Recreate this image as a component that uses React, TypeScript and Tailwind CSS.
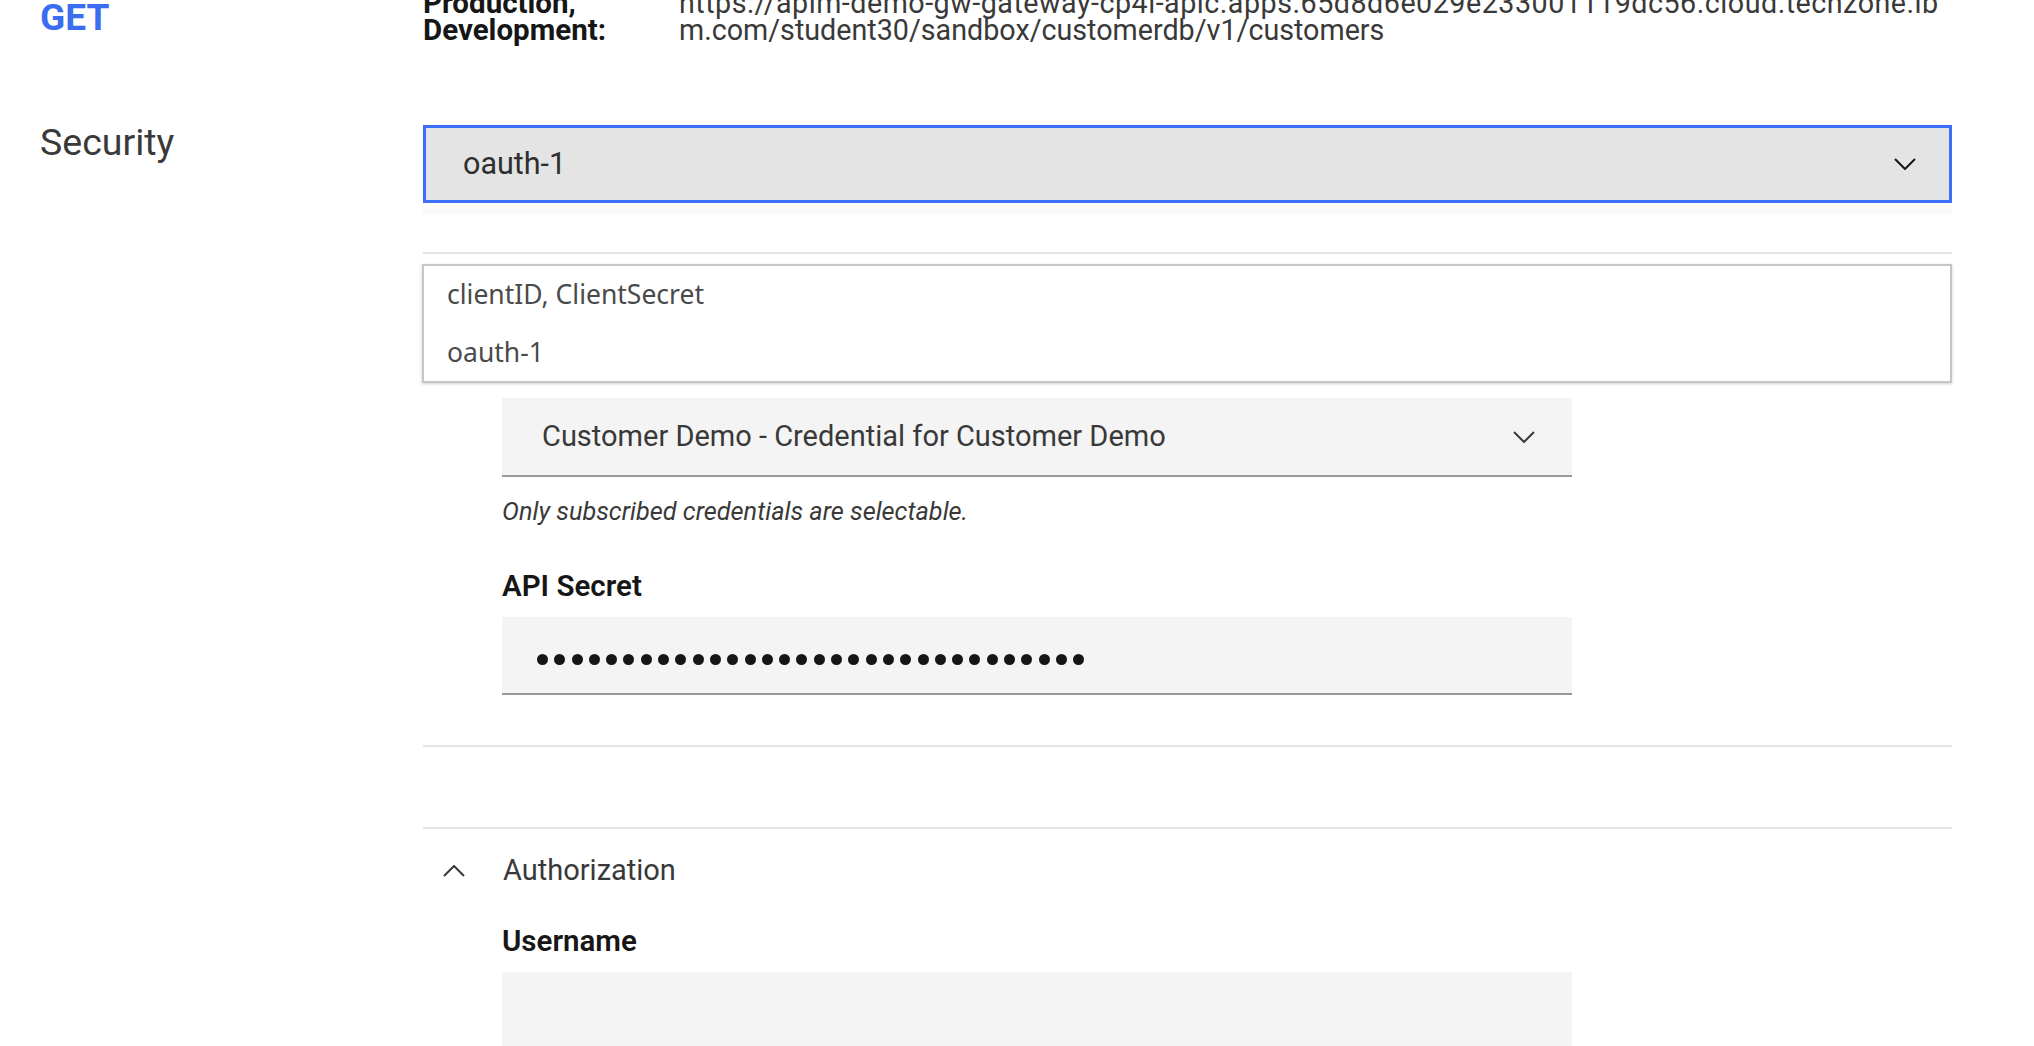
import React from 'react';

function Chevron({ up = false, className = '' }: { up?: boolean; className?: string }) {
  return (
    <svg width="22" height="12" viewBox="0 0 22 12" fill="none" className={className}>
      <polyline
        points={up ? '1,11 11,1 21,11' : '1,1 11,11 21,1'}
        stroke="currentColor"
        strokeWidth="2"
      />
    </svg>
  );
}

export default function App() {
  const dots = Array.from({ length: 32 });

  return (
    <div className="relative h-[1046px] w-[2034px] overflow-hidden bg-white font-['Roboto',sans-serif] text-[#161616]">
      {/* endpoint row */}
      <div className="flex items-start">
        <div className="-mt-[1px] w-[423px] pl-[40px] text-[37px] font-bold leading-[37px] text-[#3a6df0]">
          GET
        </div>
        <div className="-mt-[10px] flex">
          <div className="w-[256px] text-[29.5px] font-bold leading-[27px]">
            Production,
            <br />
            Development:
          </div>
          <div className="text-[28.7px] leading-[27px] text-[#393939]">
            <span className="tracking-[0.5px]">
              https://apim-demo-gw-gateway-cp4i-apic.apps.65d8d6e029e233001119dc56.cloud.techzone.ib
            </span>
            <br />
            m.com/student30/sandbox/customerdb/v1/customers
          </div>
        </div>
      </div>

      {/* security row */}
      <div className="mt-[81px] flex items-start">
        <div className="-mt-[1px] w-[423px] pl-[40px] text-[37.5px] leading-[37px] text-[#393939]">
          Security
        </div>
        <div className="w-[1529px]">
          <div className="flex h-[78px] items-center justify-between border-[3px] border-[#3d6ff7] bg-[#e4e4e4] pl-[37px] pr-[33px] text-[30.5px] text-[#2f2f2f]">
            <span>oauth-1</span>
            <Chevron className="text-[#161616]" />
          </div>
          <div className="mt-[4px] h-[8px] bg-[#fafafa]" />

          <div className="relative mt-[37px]">
            <div className="h-[2px] bg-[#e4e4e4]" />
            <div className="pl-[79px] pt-[144px]">
              <div className="flex h-[79px] w-[1070px] items-center justify-between border-b-2 border-[#9a9a9a] bg-[#f4f4f4] pl-[40px] pr-[37px] text-[29px] text-[#393939]">
                <span>Customer Demo - Credential for Customer Demo</span>
                <Chevron className="text-[#393939]" />
              </div>
              <div className="mt-[22px] text-[25.3px] italic leading-[26px] text-[#393939]">
                Only subscribed credentials are selectable.
              </div>
              <div className="mt-[46px] text-[29.5px] font-semibold leading-[30px]">API Secret</div>
              <div className="mt-[16px] flex h-[78px] w-[1070px] items-center gap-[6.3px] border-b-2 border-[#9a9a9a] bg-[#f4f4f4] pl-[35px] pt-[8px]">
                {dots.map((_, i) => (
                  <span key={i} className="h-[11px] w-[11px] rounded-full bg-[#161616]" />
                ))}
              </div>
            </div>

            {/* open security menu */}
            <div className="absolute left-[-1px] top-[12px] flex h-[119px] w-[1530px] flex-col gap-[29px] border-2 border-[#c6c6c6] bg-white pl-[23px] pt-[14px] font-['Noto_Sans',sans-serif] text-[26.5px] leading-[29px] text-[#4a4a4a] shadow-[0_1px_3px_rgba(0,0,0,0.2)]">
              <div>clientID, ClientSecret</div>
              <div>oauth-1</div>
            </div>
          </div>

          <div className="mt-[50px] h-[2px] bg-[#e4e4e4]" />
          <div className="mt-[80px] h-[2px] bg-[#e4e4e4]" />

          <div className="mt-[25px] flex h-[34px] items-center pl-[20px]">
            <Chevron up className="text-[#393939]" />
            <span className="ml-[38px] text-[29px] text-[#393939]">Authorization</span>
          </div>
          <div className="pl-[79px]">
            <div className="mt-[38px] text-[29.5px] font-semibold leading-[30px]">Username</div>
            <div className="mt-[16px] h-[78px] w-[1070px] bg-[#f4f4f4]" />
          </div>
        </div>
      </div>
    </div>
  );
}
